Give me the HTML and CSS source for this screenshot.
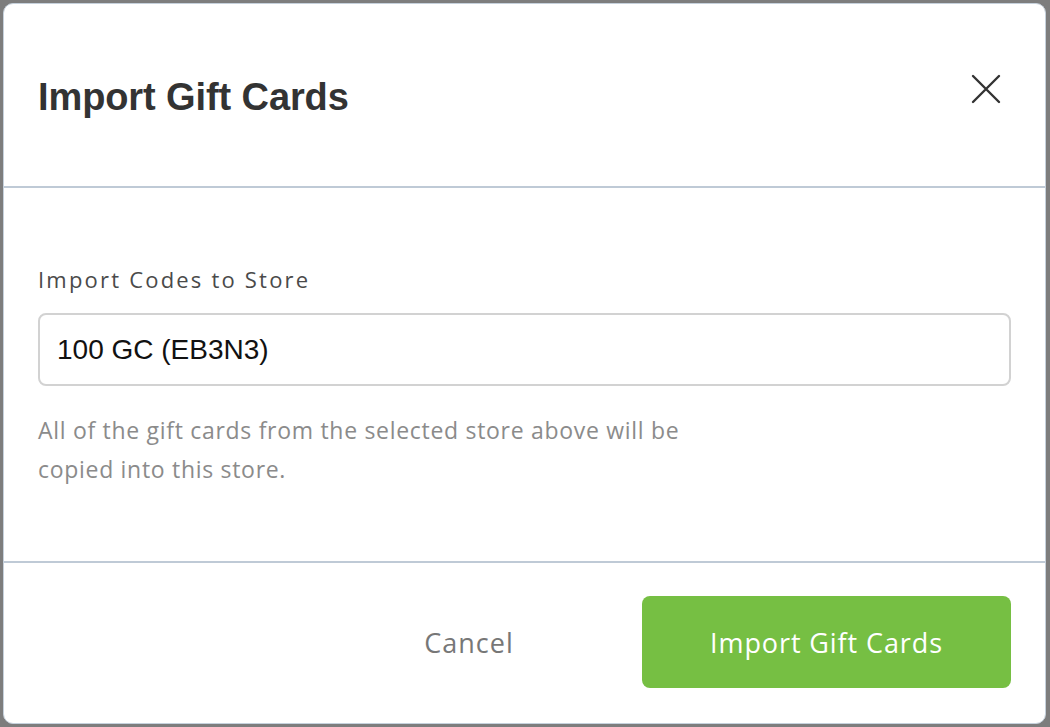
FILE: index.html
```html
<!DOCTYPE html>
<html lang="en">
<head>
  <meta charset="UTF-8" />
  <meta name="viewport" content="width=device-width, initial-scale=1" />
  <title>Import Gift Cards</title>
  <link rel="stylesheet" href="styles.css">
</head>
<body>

  <!-- Modal -->
  <div class="modal">
    <div class="modal-header">
      <h1 class="modal-title">Import Gift Cards</h1>
      <button class="close-btn" aria-label="Close">
        <svg width="30" height="30" viewBox="0 0 30 30">
          <path d="M2 2 L28 28 M28 2 L2 28" stroke="#333" stroke-width="2.4" stroke-linecap="round" fill="none" />
        </svg>
      </button>
    </div>

    <div class="modal-body">
      <label class="field-label" for="store-input">Import Codes to Store</label>
      <input class="field-input" id="store-input" type="text" value="100 GC (EB3N3)">
      <p class="help-text">All of the gift cards from the selected store above will be copied into this store.</p>
    </div>

    <div class="modal-footer">
      <button class="btn-cancel">Cancel</button>
      <button class="btn-primary">Import Gift Cards</button>
    </div>
  </div>

</body>
</html>
```

FILE: styles.css
```css
* { box-sizing: border-box; margin: 0; padding: 0; }
html, body { height: 100%; }
body { background: #7d7d7d; font-family: "Open Sans", Lato, sans-serif; padding: 3px 4px 3px 3px; }

/* ===== Modal ===== */
.modal {
  height: 721px;
  background: white;
  border: 1px solid #c6d1dc;
  border-radius: 10px;
  display: flex;
  flex-direction: column;
}

.modal-header {
  height: 184px;
  display: flex;
  align-items: center;
  justify-content: space-between;
  padding: 4px 44px 0 34px;
  border-bottom: 2px solid #bfcad6;
}
.modal-title { font-family: "Liberation Sans", Arial, sans-serif; font-weight: bold; font-size: 38px; color: #333; letter-spacing: -0.1px; }
.close-btn { background: none; border: none; cursor: pointer; width: 30px; height: 30px; margin-bottom: 16px; }

/* ===== Body ===== */
.modal-body { flex: 1; padding: 75px 34px 0; display: flex; flex-direction: column; }
.field-label { font-size: 22px; line-height: 32px; color: #4a4a4a; letter-spacing: 2.2px; }
.field-input {
  margin-top: 18px;
  height: 73px;
  border: 2px solid #d2d2d2;
  border-radius: 8px;
  padding: 0 17px;
  font-family: "Liberation Sans", Arial, sans-serif;
  font-size: 28px;
  color: #111;
  outline: none;
}
.help-text { margin-top: 25px; max-width: 690px; font-size: 23px; line-height: 39px; color: #8b8b8b; letter-spacing: 0.7px; }

/* ===== Footer ===== */
.modal-footer {
  border-top: 2px solid #bfcad6;
  height: 162px;
  display: flex;
  align-items: center;
  justify-content: flex-end;
  gap: 58px;
  padding: 0 34px 2px;
}
.btn-cancel { background: none; border: none; width: 230px; height: 92px; font-family: inherit; font-size: 27px; color: #777; letter-spacing: 1px; cursor: pointer; }
.btn-primary {
  width: 369px;
  height: 92px;
  background: #76bf43;
  color: white;
  border: none;
  border-radius: 8px;
  font-family: inherit;
  font-size: 27px;
  letter-spacing: 0.9px;
  cursor: pointer;
}
```
